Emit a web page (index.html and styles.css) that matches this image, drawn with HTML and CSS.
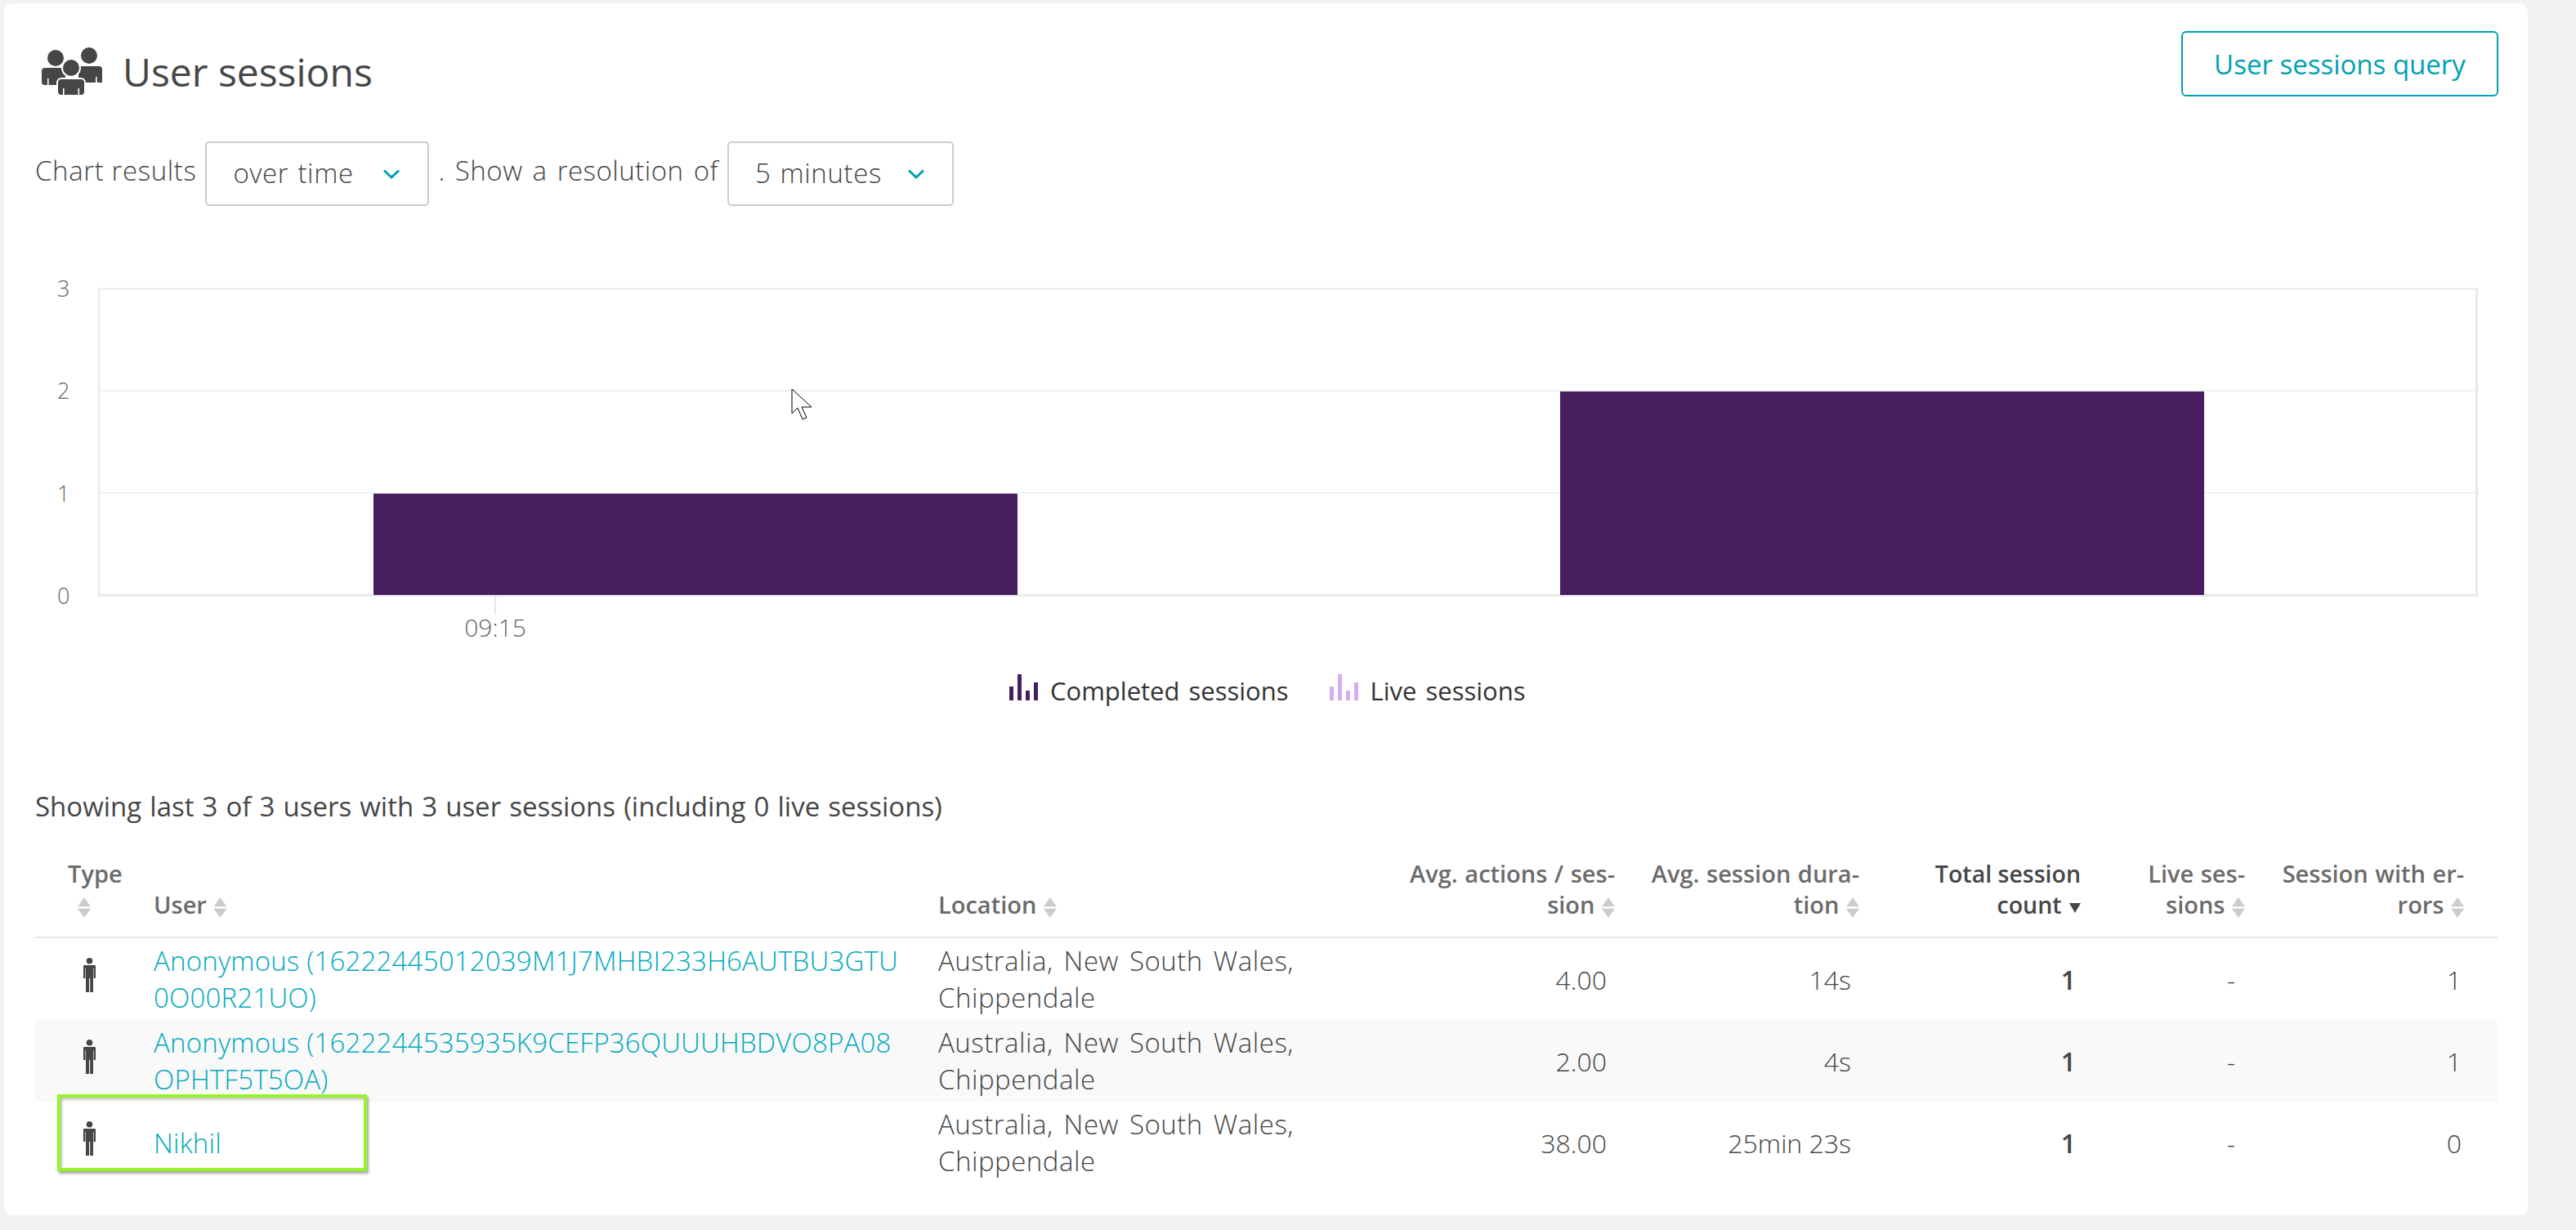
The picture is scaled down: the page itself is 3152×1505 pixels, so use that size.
FILE: index.html
```html
<!DOCTYPE html>
<html lang="en">
<head>
<meta charset="utf-8">
<title>User sessions</title>
<link rel="stylesheet" href="styles.css">
</head>
<body>
<main class="card">
  <header class="top">
    <div class="title-wrap">
      <svg class="users-icon" viewBox="0 0 76 58" aria-hidden="true">
        <circle cx="18" cy="13" r="10"/>
        <circle cx="59" cy="10" r="10"/>
        <path d="M5 25h21a4 4 0 0 1 4 4v17H5a4 4 0 0 1-4-4V29a4 4 0 0 1 4-4z"/>
        <path d="M46 23h25a4 4 0 0 1 4 4v16h-6v-1h-1v1H46z"/>
        <rect class="slit" x="8" y="38" width="1.6" height="8"/>
        <rect class="slit" x="67" y="36" width="1.6" height="8"/>
        <circle class="halo" cx="37" cy="25" r="12"/>
        <circle cx="37" cy="25" r="10"/>
        <rect class="halo" x="19" y="37" width="36" height="21" rx="6"/>
        <path d="M25 39h24a4 4 0 0 1 4 4v11a4 4 0 0 1-4 4H25a4 4 0 0 1-4-4V43a4 4 0 0 1 4-4z"/>
        <rect class="slit" x="27" y="50" width="1.6" height="8"/>
        <rect class="slit" x="45.5" y="50" width="1.6" height="8"/>
      </svg>
      <h1 class="title">User sessions</h1>
    </div>
    <a class="query-btn">User sessions query</a>
  </header>

  <div class="controls">
    <span class="label">Chart results</span>
    <div class="select sel-a"><span class="val">over time</span>
      <svg class="chev" viewBox="0 0 22 12" aria-hidden="true"><path d="M2 1.5l9 8.5 9-8.5"/></svg>
    </div>
    <span class="label after">. Show a resolution of</span>
    <div class="select sel-b"><span class="val">5 minutes</span>
      <svg class="chev" viewBox="0 0 22 12" aria-hidden="true"><path d="M2 1.5l9 8.5 9-8.5"/></svg>
    </div>
  </div>

  <section class="chart">
    <div class="y-axis"><span>3</span><span>2</span><span>1</span><span>0</span></div>
    <div class="plot-col">
      <div class="plot">
        <div class="band"></div>
        <div class="band"></div>
        <div class="band"></div>
        <div class="bar" style="left:335px;width:788px;height:124px"></div>
        <div class="bar" style="left:1787px;width:788px;height:249px"></div>
        <svg class="cursor" viewBox="0 0 26 39" aria-hidden="true"><path d="M1 1v30l7-7 6 14 5-2-6-13h12z"/></svg>
      </div>
      <div class="x-axis"><div class="tick"><i></i><span>09:15</span></div></div>
    </div>
  </section>

  <div class="legend">
    <span class="legend-item">
      <svg class="bars c-done" viewBox="0 0 35 32" aria-hidden="true"><rect y="15" width="5" height="17"/><rect x="10" width="5" height="32"/><rect x="20" y="20" width="5" height="12"/><rect x="30" y="10" width="5" height="22"/></svg>
      Completed sessions
    </span>
    <span class="legend-item">
      <svg class="bars c-live" viewBox="0 0 35 32" aria-hidden="true"><rect y="15" width="5" height="17"/><rect x="10" width="5" height="32"/><rect x="20" y="20" width="5" height="12"/><rect x="30" y="10" width="5" height="22"/></svg>
      Live sessions
    </span>
  </div>

  <p class="summary">Showing last 3 of 3 users with 3 user sessions (including 0 live sessions)</p>

  <div class="table-wrap">
    <table class="sessions">
      <colgroup>
        <col class="c1"><col class="c2"><col class="c3"><col class="c4"><col class="c5"><col class="c6"><col class="c7"><col class="c8">
      </colgroup>
      <thead>
        <tr>
          <th class="th-type">Type<br><span class="sort"></span></th>
          <th>User <span class="sort"></span></th>
          <th>Location <span class="sort"></span></th>
          <th class="num">Avg. actions / ses-<br>sion <span class="sort"></span></th>
          <th class="num">Avg. session dura-<br>tion <span class="sort"></span></th>
          <th class="num active">Total session<br>count <span class="sort-down"></span></th>
          <th class="num">Live ses-<br>sions <span class="sort"></span></th>
          <th class="num last">Session with er-<br>rors <span class="sort"></span></th>
        </tr>
      </thead>
      <tbody>
        <tr>
          <td class="td-type"><svg class="person" viewBox="0 0 15 42" aria-hidden="true"><circle cx="7.5" cy="3.8" r="3.8"/><path d="M1 9h13a1 1 0 0 1 1 1v15h-2.4V13h-.6v29H8.2V25H7v17H3V13h-.6v12H0V10a1 1 0 0 1 1-1z"/></svg></td>
          <td class="usr"><a class="link">Anonymous (16222445012039M1J7MHBI233H6AUTBU3GTU<br>0O00R21UO)</a></td>
          <td class="loc">Australia, New South Wales,<br>Chippendale</td>
          <td class="num">4.00</td><td class="num">14s</td><td class="num strong">1</td><td class="num dash">-</td><td class="num last">1</td>
        </tr>
        <tr class="stripe">
          <td class="td-type"><svg class="person" viewBox="0 0 15 42" aria-hidden="true"><circle cx="7.5" cy="3.8" r="3.8"/><path d="M1 9h13a1 1 0 0 1 1 1v15h-2.4V13h-.6v29H8.2V25H7v17H3V13h-.6v12H0V10a1 1 0 0 1 1-1z"/></svg></td>
          <td class="usr"><a class="link">Anonymous (1622244535935K9CEFP36QUUUHBDVO8PA08<br>OPHTF5T5OA)</a></td>
          <td class="loc">Australia, New South Wales,<br>Chippendale</td>
          <td class="num">2.00</td><td class="num">4s</td><td class="num strong">1</td><td class="num dash">-</td><td class="num last">1</td>
        </tr>
        <tr>
          <td class="td-type"><svg class="person" viewBox="0 0 15 42" aria-hidden="true"><circle cx="7.5" cy="3.8" r="3.8"/><path d="M1 9h13a1 1 0 0 1 1 1v15h-2.4V13h-.6v29H8.2V25H7v17H3V13h-.6v12H0V10a1 1 0 0 1 1-1z"/></svg></td>
          <td class="usr"><a class="link">Nikhil</a></td>
          <td class="loc">Australia, New South Wales,<br>Chippendale</td>
          <td class="num">38.00</td><td class="num">25min 23s</td><td class="num strong">1</td><td class="num dash">-</td><td class="num last">0</td>
        </tr>
      </tbody>
    </table>
    <div class="highlight"></div>
  </div>
</main>
</body>
</html>
```
FILE: styles.css
```css
* { box-sizing: border-box; }
html, body { margin: 0; height: 100%; }
body {
  background: #f2f2f2;
  padding: 4px 0 0 5px;
  font-family: "Open Sans", "Noto Sans", sans-serif;
  font-weight: 300;
  color: #454646;
  font-size: 32px;
  overflow: hidden;
}
.card {
  width: 3088px;
  height: 1483px;
  background: #fff;
  border-radius: 10px;
  padding: 34px 36px 0 38px;
}
.top { display: flex; justify-content: space-between; align-items: flex-start; height: 80px; }
.title-wrap { display: flex; align-items: flex-start; padding: 20px 0 0 7px; }
.users-icon { width: 76px; height: 58px; fill: #454646; flex: none; }
.users-icon .halo { fill: #fff; }
.users-icon .slit { fill: #fff; }
.title { margin: 0 0 0 24px; font-size: 48px; line-height: 60px; font-weight: 500; color: #454646; }
.query-btn {
  width: 388px; height: 80px;
  border: 2px solid #00a1b2;
  border-radius: 6px;
  color: #00a1b2;
  display: flex; align-items: center; justify-content: center;
  font-size: 33px;
  font-weight: 400;
}
.controls { display: flex; align-items: center; margin-top: 55px; height: 79px; font-size: 33px; }
.label { position: relative; top: -4px; letter-spacing: .6px; }
.label.after { letter-spacing: .5px; word-spacing: 3px; }
.val { position: relative; top: -1px; letter-spacing: .6px; word-spacing: 2px; }
.select {
  height: 79px;
  border: 2px solid #ccc;
  border-radius: 5px;
  display: flex; align-items: center; justify-content: space-between;
  padding: 0 33px 0 32px;
}
.sel-a { width: 274px; margin-left: 11px; margin-right: 11px; }
.sel-b { width: 277px; margin-left: 11px; }
.chev { width: 22px; height: 12px; fill: none; stroke: #00a1b2; stroke-width: 3; flex: none; }
.chart { display: flex; margin-top: 100px; margin-left: -2px; }
.y-axis {
  width: 43px; height: 400px; margin-top: -11px;
  display: flex; flex-direction: column; justify-content: space-between;
  font-size: 27px; line-height: 24px; color: #666;
  padding: 0 0 0 29px;
}
.y-axis span { display: block; }
.plot-col { margin-left: 36px; }
.plot {
  position: relative;
  width: 2912px; height: 378px;
  border: 2px solid #e8e8e8;
  border-top: 3px solid #f0f0f0;
  display: flex; flex-direction: column;
  border-right-width: 3px;
}
.band { flex: 1; border-bottom: 2px solid #f2f2f2; }
.band:last-of-type { border-bottom: 0; }
.bar { position: absolute; bottom: 0; background: #471f60; }
.cursor { position: absolute; left: 846px; top: 120px; width: 26px; height: 39px; fill: #fff; stroke: #000; stroke-width: 1; }
.x-axis { height: 56px; position: relative; }
.tick { position: absolute; left: 446px; top: 0; width: 100px; margin-left: -10px; display: flex; flex-direction: column; align-items: center; font-size: 30px; color: #666; }
.tick i { width: 2px; height: 22px; background: #e8e8e8; }
.tick span { line-height: 36px; margin-top: -2px; }
.legend { display: flex; justify-content: flex-start; padding-left: 1192px; gap: 50px; margin-top: 37px; height: 44px; align-items: center; font-size: 31px; word-spacing: 3px; color: #333; font-weight: 400; }
.legend-item { display: flex; align-items: center; gap: 15px; }
.bars { width: 35px; height: 32px; flex: none; position: relative; top: -4px; }
.c-done { fill: #471f60; }
.c-live { fill: #d5aeeb; }
.summary { margin: 97px 0 41px; font-size: 33px; word-spacing: 1.5px; line-height: 45px; font-weight: 400; color: #454646; }
.table-wrap { position: relative; }
.sessions { border-collapse: collapse; table-layout: fixed; width: 3013px; }
.c1 { width: 129px; } .c2 { width: 960px; } .c3 { width: 568px; } .c4 { width: 292px; }
.c5 { width: 299px; } .c6 { width: 271px; } .c7 { width: 201px; } .c8 { width: 293px; }
.sessions th {
  font-size: 29px; word-spacing: 1px; line-height: 38px; font-weight: 600; color: #6b6b6b;
  text-align: left; vertical-align: bottom;
  padding: 0 16px 20px;
  border-bottom: 2px solid #e6e6e6;
  white-space: nowrap;
}
.sessions th.th-type { padding-left: 40px; }
.sessions th.num { text-align: right; }
.sessions th.last { padding-right: 41px; }
.sessions th.active { color: #454646; font-size: 28.5px; word-spacing: 0; }
.sessions td { padding: 5px 16px; line-height: 45px; height: 100px; vertical-align: middle; white-space: nowrap; }
.sessions td.usr { font-size: 33px; letter-spacing: .2px; }
.sessions td.loc { font-size: 33px; letter-spacing: .5px; word-spacing: 4px; }
.sessions td.num { text-align: right; padding-right: 26px; }
.sessions td.num.last { padding-right: 44px; }
.sessions td.num.dash { padding-right: 28px; }
.sessions td.num.strong { font-weight: 600; padding-right: 22px; }
.stripe { background: #f9f9f9; }
.person { width: 15px; height: 42px; fill: #454646; display: block; margin: -10px 0 0 43px; }
.link { color: #00a9bd; }
.sort { display: inline-block; width: 16px; height: 25px; vertical-align: -5px;
  background: #ccc;
  clip-path: polygon(50% 0, 100% 45%, 0 45%, 0 55%, 100% 55%, 50% 100%, 0 55%, 0 45%);
}
.th-type .sort { margin-left: 12px; }
.sort-down { display: inline-block; width: 0; height: 0; border: 7.5px solid transparent; border-top: 12px solid #454646; border-bottom: 0; vertical-align: 1px; margin-left: 2px; }
.highlight { position: absolute; left: 27px; top: 289px; width: 379px; height: 94px; border: 4px solid #96f52a; box-shadow: 2px 3px 3px rgba(0,0,0,.35), inset 2px 2px 3px rgba(0,0,0,.25); pointer-events: none; }
```
